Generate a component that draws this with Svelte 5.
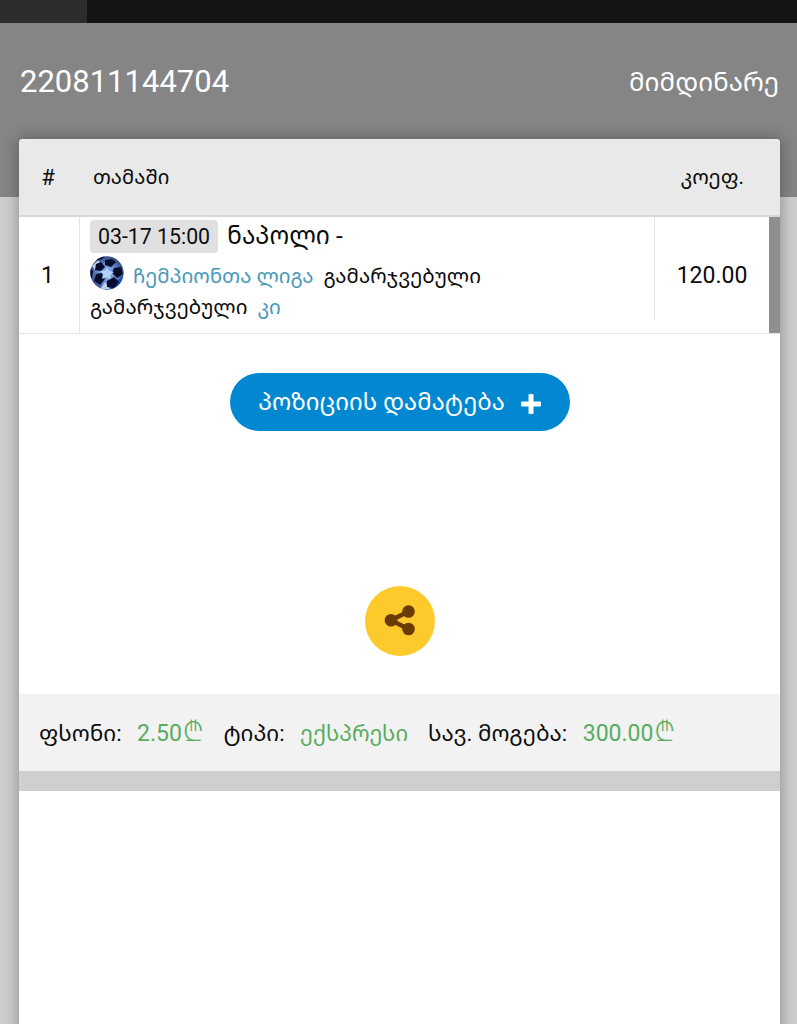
<script lang="ts">
	const ticket = {
		id: '220811144704',
		status: 'მიმდინარე',
		stake: '2.50',
		type: 'ექსპრესი',
		win: '300.00'
	};

	const games = [
		{
			date: '03-17 15:00',
			teams: 'ნაპოლი -',
			league: 'ჩემპიონთა ლიგა',
			market: 'გამარჯვებული',
			outcome: 'გამარჯვებული',
			pick: 'კი',
			odds: '120.00'
		}
	];
</script>

<div class="page">
	<div class="tabs"><div class="tab"></div></div>

	<header class="head">
		<span class="ticket-id">{ticket.id}</span>
		<span class="status geo">{ticket.status}</span>
	</header>

	<main class="card">
		<div class="row table-head">
			<span class="num">#</span>
			<span class="game geo">თამაში</span>
			<span class="coef geo">კოეფ.</span>
		</div>

		{#each games as g, i}
			<div class="row game-row">
				<div class="num">{i + 1}</div>
				<div class="game">
					<div class="line first">
						<span class="date">{g.date}</span>
						<span class="teams geo">{g.teams}</span>
					</div>
					<div class="line second">
						<svg class="ball" viewBox="0 0 34 34" aria-hidden="true">
							<defs>
								<radialGradient id="ball-fill" cx="0.5" cy="0.52" r="0.52">
									<stop offset="0" stop-color="#9fc2f4" />
									<stop offset="0.55" stop-color="#6189cc" />
									<stop offset="1" stop-color="#33457c" />
								</radialGradient>
								<clipPath id="ball-clip"><circle cx="17" cy="17" r="16.7" /></clipPath>
							</defs>
							<g clip-path="url(#ball-clip)">
								<circle cx="17" cy="17" r="17" fill="url(#ball-fill)" />
								<path d="M2 10L8 4L13 10L5 14ZM10 33L15 26L20 33Z" fill="#b9cdef" />
								<path d="M27 25L33 20L29 32L20 34Z" fill="#1551c8" />
								<g fill="#060d2a">
									<path d="M15 4L22 3L26 6L21 11L15 9Z" />
									<path d="M6 8L11 6L15 11L11 15L5 14Z" />
									<path d="M24 12L31 11L33 18L27 22L22 17Z" />
									<path d="M6 18L12 17L15 23L10 29L4 25Z" />
									<path d="M17 25L24 21L29 26L24 32L17 31Z" />
									<path d="M0 12L3 15L2 22L0 22Z" />
									<path d="M9 0L15 0L12 3L6 5Z" />
								</g>
								<path d="M17 11L19 15L24 16L20 19L21 23L16.500 21L12 23L13 18L10 15L15 15Z" fill="#b4d0fb" />
							</g>
						</svg>
						<span class="league geo">{g.league}</span>
						<span class="market geo">{g.market}</span>
					</div>
					<div class="line third">
						<span class="outcome geo">{g.outcome}</span>
						<span class="pick geo">{g.pick}</span>
					</div>
				</div>
				<div class="coef">{g.odds}</div>
				<div class="state"></div>
			</div>
		{/each}

		<button type="button" class="add">
			<span class="add-label geo">პოზიციის დამატება</span>
			<svg class="plus" width="20" height="20" viewBox="0 0 20 20" aria-hidden="true">
				<path
					d="M8.500 0h3q1 0 1 1v6.500h6.500q1 0 1 1v3q0 1-1 1h-6.500v6.500q0 1-1 1h-3q-1 0-1-1v-6.500h-6.500q-1 0-1-1v-3q0-1 1-1h6.500v-6.500q0-1 1-1z"
					fill="#fff"
				/>
			</svg>
		</button>

		<button type="button" class="share" aria-label="გაზიარება">
			<svg width="32" height="32" viewBox="0 0 32 32" aria-hidden="true">
				<path d="M24.500 6.500L7 15.300L24.500 24" fill="none" stroke="#693c05" stroke-width="4.500" />
				<circle cx="24.500" cy="6.500" r="6.300" fill="#693c05" />
				<circle cx="7" cy="15.300" r="6.300" fill="#693c05" />
				<circle cx="24.500" cy="24" r="6.300" fill="#693c05" />
			</svg>
		</button>

		<div class="summary">
			<span class="label geo">ფსონი:</span>
			<span class="value">{ticket.stake}<span class="lari">₾</span></span>
			<span class="label geo">ტიპი:</span>
			<span class="value geo v-type">{ticket.type}</span>
			<span class="label geo">სავ. მოგება:</span>
			<span class="value">{ticket.win}<span class="lari">₾</span></span>
		</div>
		<div class="strip"></div>
	</main>
</div>

<style>
	:global(body) {
		background: #cbcbcb;
	}

	.page {
		display: flex;
		flex-direction: column;
		height: 1024px;
		overflow: hidden;
		font-family: Roboto, 'Noto Sans Georgian', 'Noto Sans', 'DejaVu Sans', sans-serif;
		font-size: 23px;
		color: #0c0c0c;
		background: #cecece;
	}

	.geo {
		white-space: nowrap;
	}

	.tabs {
		flex: none;
		height: 23px;
		background: #141414;
	}

	.tab {
		width: 87px;
		height: 23px;
		background: #2d2d2d;
	}

	.head {
		flex: none;
		box-sizing: border-box;
		height: 174px;
		padding: 0 18px 57px 20px;
		display: flex;
		align-items: center;
		justify-content: space-between;
		background: #858585;
		color: #fff;
	}

	.ticket-id {
		font-size: 31px;
	}

	.status {
		font-size: 26px;
		line-height: 30px;
	}

	.card {
		flex: 1;
		display: flex;
		flex-direction: column;
		align-items: center;
		margin: -58px 17px -40px 19px;
		background: #fff;
		border-radius: 4px 4px 0 0;
		box-shadow: 0 0 16px rgba(0, 0, 0, 0.35);
	}

	.row {
		display: flex;
		box-sizing: border-box;
		width: 100%;
	}

	.table-head {
		height: 78px;
		align-items: center;
		background: #e9e9e9;
		border-bottom: 2px solid #d8d8d8;
		border-radius: 4px 4px 0 0;
		font-size: 20.3px;
	}

	.table-head .num {
		width: 58px;
		font-size: 22px;
		text-align: center;
	}

	.table-head .game {
		flex: 1;
		padding: 0 0 2px 16px;
	}

	.table-head .coef {
		padding: 0 36px 2px 0;
		font-size: 20.7px;
	}

	.game-row {
		height: 117px;
		border-bottom: 1px solid #e4e4e4;
	}

	.game-row .num {
		box-sizing: border-box;
		width: 61px;
		display: flex;
		align-items: center;
		justify-content: center;
		padding-right: 3px;
		border-right: 1px solid #e4e4e4;
	}

	.game-row .game {
		flex: 1;
		padding: 3px 0 0 10px;
	}

	.line {
		display: flex;
		align-items: center;
		gap: 10px;
	}

	.first {
		height: 33px;
	}

	.second {
		height: 40px;
	}

	.third {
		height: 26px;
	}

	.date {
		padding: 0 8px;
		background: #e0e0e0;
		border-radius: 4px;
		font-size: 21.3px;
		line-height: 33px;
	}

	.ball {
		width: 34px;
		height: 34px;
		margin-right: -1px;
	}

	.teams {
		margin-left: -1px;
		padding-bottom: 4px;
		font-size: 24.5px;
	}

	.league,
	.market,
	.outcome,
	.pick {
		font-size: 20.5px;
	}

	.league,
	.market {
		padding-top: 3px;
	}

	.league,
	.pick {
		color: #4a9abb;
	}

	.game-row .coef {
		box-sizing: border-box;
		width: 115px;
		height: 103px;
		padding-top: 13px;
		display: flex;
		align-items: center;
		justify-content: center;
		border-left: 1px solid #e4e4e4;
	}

	.state {
		width: 11px;
		background: #8f8f8f;
	}

	button {
		border: 0;
		padding: 0;
		font-family: inherit;
		display: flex;
		align-items: center;
		justify-content: center;
	}

	.add {
		flex: none;
		width: 340px;
		height: 58px;
		margin-top: 39px;
		gap: 16px;
		border-radius: 29px;
		background: #0288d1;
		color: #fff;
		font-size: 23.9px;
	}

	.add-label {
		padding-bottom: 3px;
	}

	.plus {
		margin-top: 3px;
	}

	.share {
		flex: none;
		width: 70px;
		height: 70px;
		margin-top: 155px;
		border-radius: 50%;
		background: #fdc92b;
	}

	.summary {
		flex: none;
		box-sizing: border-box;
		width: 100%;
		height: 77px;
		margin-top: 38px;
		padding-left: 20px;
		display: flex;
		align-items: center;
		background: #f2f2f2;
		white-space: nowrap;
	}

	.label {
		margin-right: 15.5px;
		font-size: 22.4px;
	}

	.value {
		margin-right: 20px;
		color: #58ad61;
	}

	.v-type {
		font-size: 22px;
	}

	.lari {
		margin-left: 1px;
		font-size: 27px;
		font-weight: 300;
		line-height: 1;
	}

	.strip {
		flex: none;
		width: 100%;
		height: 20px;
		background: #cfcfcf;
	}
</style>
